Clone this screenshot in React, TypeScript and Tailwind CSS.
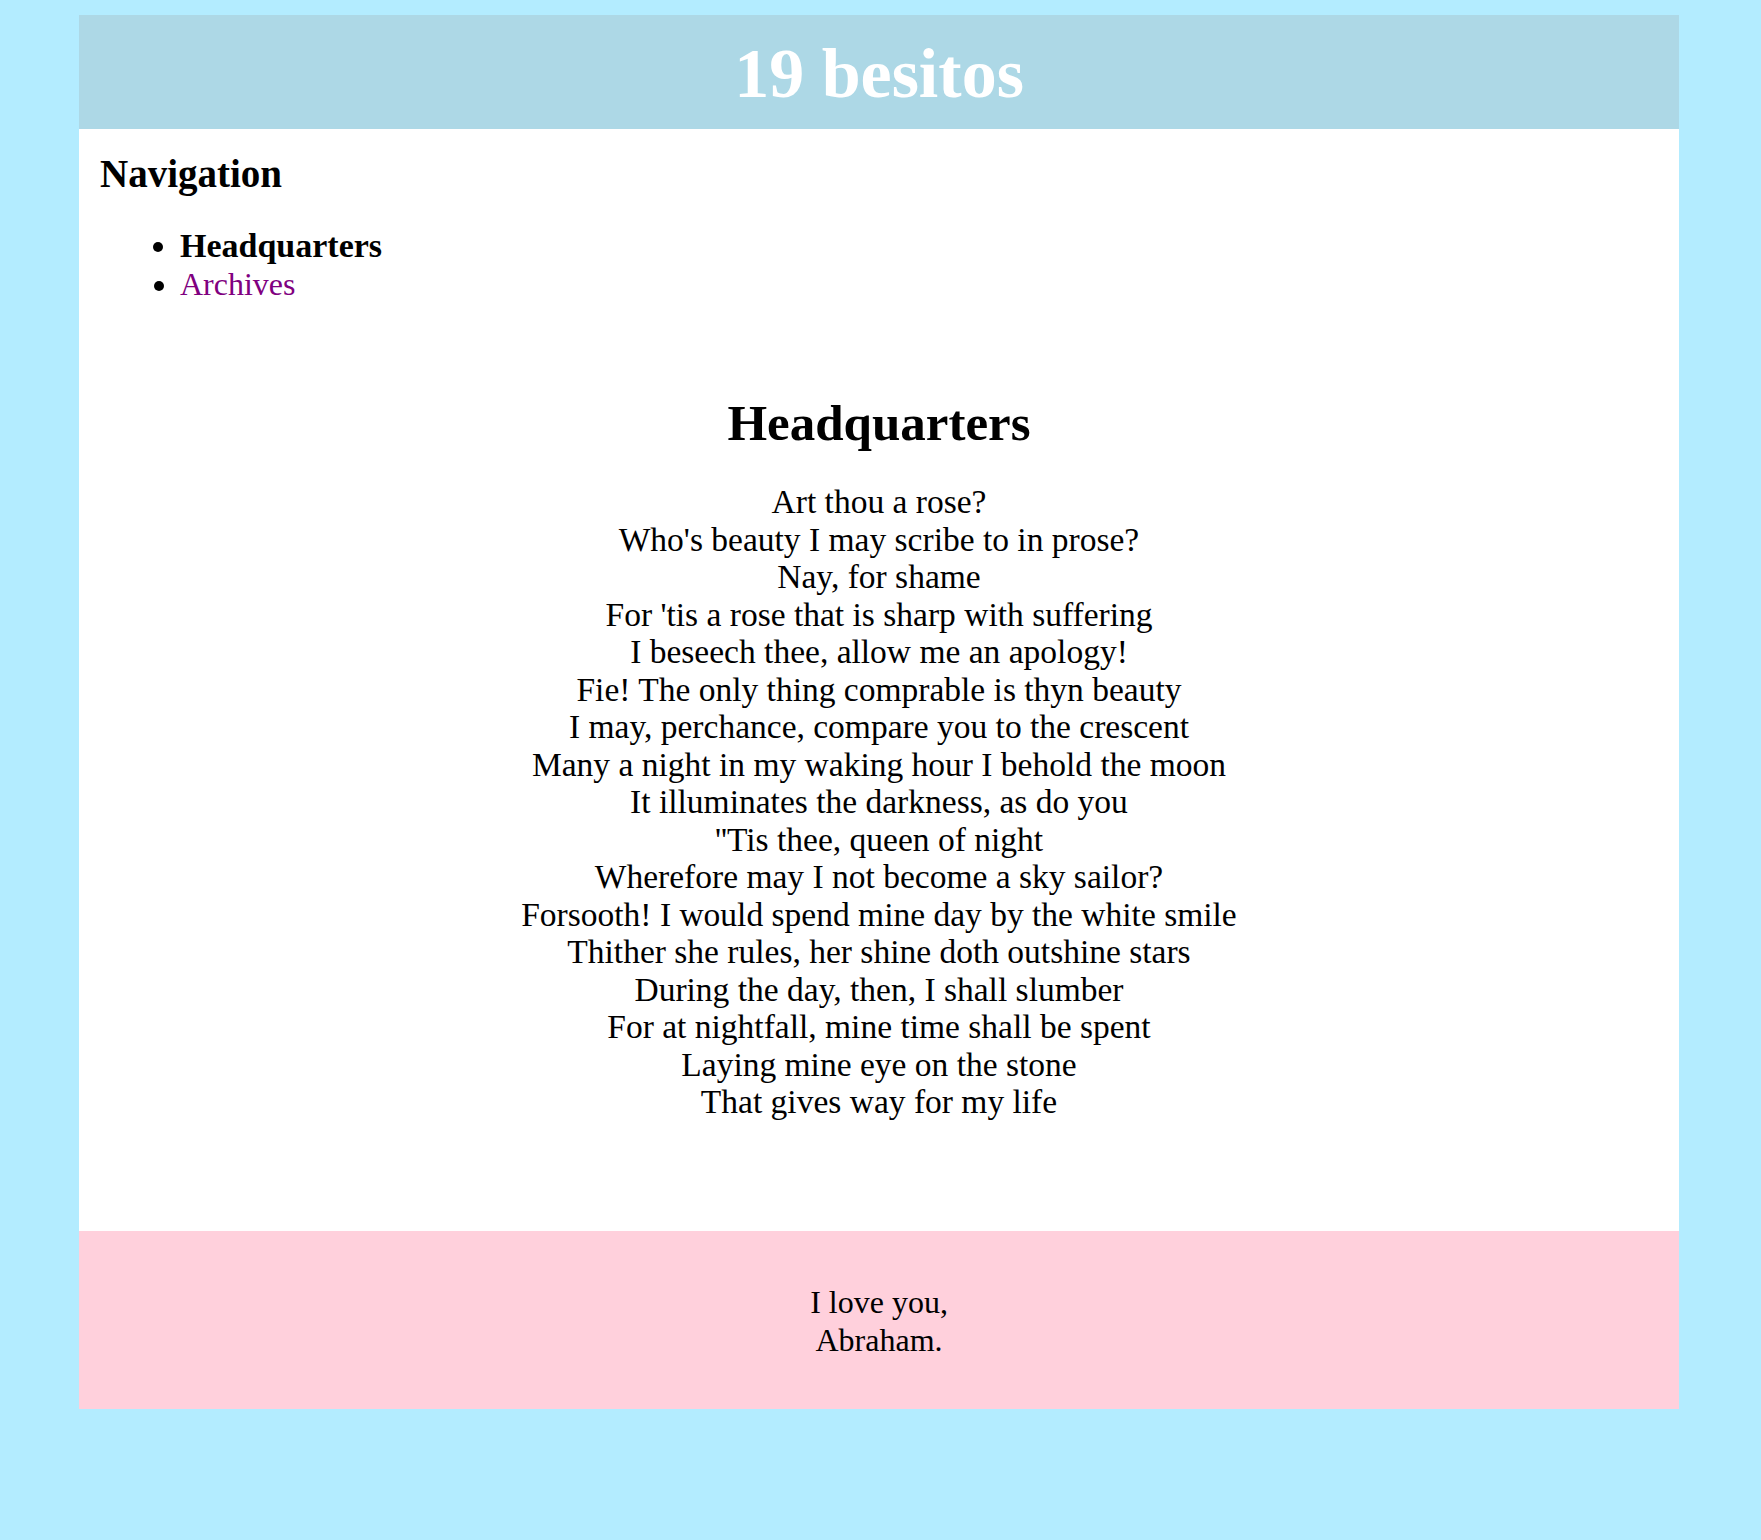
import React from 'react';

const poem = [
  'Art thou a rose?',
  "Who's beauty I may scribe to in prose?",
  'Nay, for shame',
  "For 'tis a rose that is sharp with suffering",
  'I beseech thee, allow me an apology!',
  'Fie! The only thing comprable is thyn beauty',
  'I may, perchance, compare you to the crescent',
  'Many a night in my waking hour I behold the moon',
  'It illuminates the darkness, as do you',
  "''Tis thee, queen of night",
  'Wherefore may I not become a sky sailor?',
  'Forsooth! I would spend mine day by the white smile',
  'Thither she rules, her shine doth outshine stars',
  'During the day, then, I shall slumber',
  'For at nightfall, mine time shall be spent',
  'Laying mine eye on the stone',
  'That gives way for my life',
];

export default function App() {
  return (
    <div className="min-h-[1540px] bg-[#b3ecff] pt-[15px] text-black font-['Liberation_Serif',serif]">
      <div className="ml-[79px] w-[1600px]">
        <header className="h-[114px] bg-[#add8e6] flex items-center justify-center">
          <h1 className="text-[70px] leading-none font-bold text-white pt-[4px]">19 besitos</h1>
        </header>

        <main className="bg-white px-[21px] pt-[23px] pb-[110px]">
          <nav>
            <h2 className="text-[39px] leading-[44px] font-bold">Navigation</h2>
            <ul className="list-disc mt-[30px] pl-[80px] text-[32px] leading-[39px]">
              <li className="font-bold text-[34px]">Headquarters</li>
              <li>
                <a href="#" className="text-[#800080]">Archives</a>
              </li>
            </ul>
          </nav>

          <section className="mt-[90px] text-center">
            <h2 className="text-[51px] leading-[58px] font-bold">Headquarters</h2>
            <div className="mt-[31px] text-[33.5px] leading-[37.5px]">
              {poem.map((line, i) => (
                <div key={i}>{line}</div>
              ))}
            </div>
          </section>
        </main>

        <footer className="h-[178px] bg-[#ffd0dc] flex flex-col items-center justify-center text-[32px] leading-[38px] pt-[2px]">
          <p>I love you,</p>
          <p>Abraham.</p>
        </footer>
      </div>
    </div>
  );
}
